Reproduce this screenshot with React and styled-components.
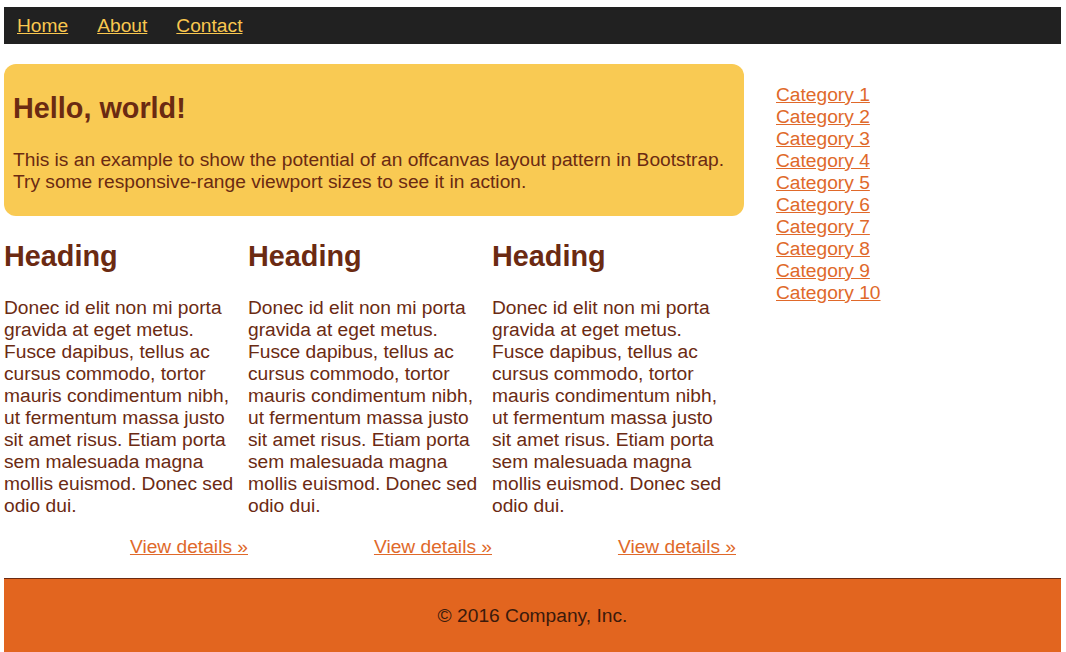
import React from "react";
import styled, { createGlobalStyle } from "styled-components";

const GlobalStyle = createGlobalStyle`
  body {
    margin: 0;
    background: #ffffff;
    font-family: "Liberation Sans", Arial, sans-serif;
    color: #6b2a12;
  }
`;

const Page = styled.div`
  padding: 7px 5px 0 4px;
`;

const NavBar = styled.nav`
  display: flex;
  align-items: center;
  gap: 29px;
  height: 37px;
  padding-left: 13px;
  background: #212121;
  a {
    font-size: 19.2px;
    line-height: 22px;
    color: #f9c74f;
  }
`;

const Body = styled.div`
  display: flex;
  align-items: flex-start;
  gap: 32px;
  margin-top: 20px;
`;

const Main = styled.main`
  width: 740px;
`;

const Jumbotron = styled.section`
  background: #f9ca53;
  border-radius: 12px;
  padding: 28px 9px 23px;
  h1 {
    margin: 0 0 24px;
    font-size: 28.8px;
    font-weight: bold;
  }
  p {
    margin: 0;
    font-size: 19.2px;
    line-height: 22px;
  }
`;

const Columns = styled.div`
  display: grid;
  grid-template-columns: repeat(3, 244px);
  margin-top: 24px;
`;

const Column = styled.article`
  h2 {
    margin: 0 0 24px;
    font-size: 28.8px;
    font-weight: bold;
  }
  p {
    margin: 0;
    padding-right: 8px;
    font-size: 19.2px;
    line-height: 22px;
  }
`;

const Details = styled.a`
  display: block;
  margin-top: 19px;
  text-align: right;
  font-size: 19.2px;
  line-height: 22px;
  color: #e0692a;
`;

const Sidebar = styled.aside`
  display: flex;
  flex-direction: column;
  padding-top: 20px;
  a {
    font-size: 19.2px;
    line-height: 22px;
    color: #e0692a;
  }
`;

const Footer = styled.footer`
  margin-top: 20px;
  border-top: 1px solid #6b2a12;
  background: #e2651f;
  padding: 26px 0 50px;
  text-align: center;
  font-size: 19.2px;
  line-height: 22px;
  color: #3b1a0c;
`;

const text =
  "Donec id elit non mi porta gravida at eget metus. Fusce dapibus, tellus ac cursus commodo, tortor mauris condimentum nibh, ut fermentum massa justo sit amet risus. Etiam porta sem malesuada magna mollis euismod. Donec sed odio dui.";

const categories = Array.from({ length: 10 }, (_, i) => `Category ${i + 1}`);

export default function App() {
  return (
    <Page>
      <GlobalStyle />
      <NavBar>
        <a href="#">Home</a>
        <a href="#">About</a>
        <a href="#">Contact</a>
      </NavBar>
      <Body>
        <Main>
          <Jumbotron>
            <h1>Hello, world!</h1>
            <p>
              This is an example to show the potential of an offcanvas layout
              pattern in Bootstrap. Try some responsive-range viewport sizes to
              see it in action.
            </p>
          </Jumbotron>
          <Columns>
            {[0, 1, 2].map((i) => (
              <Column key={i}>
                <h2>Heading</h2>
                <p>{text}</p>
                <Details href="#">View details »</Details>
              </Column>
            ))}
          </Columns>
        </Main>
        <Sidebar>
          {categories.map((c) => (
            <a href="#" key={c}>
              {c}
            </a>
          ))}
        </Sidebar>
      </Body>
      <Footer>© 2016 Company, Inc.</Footer>
    </Page>
  );
}
